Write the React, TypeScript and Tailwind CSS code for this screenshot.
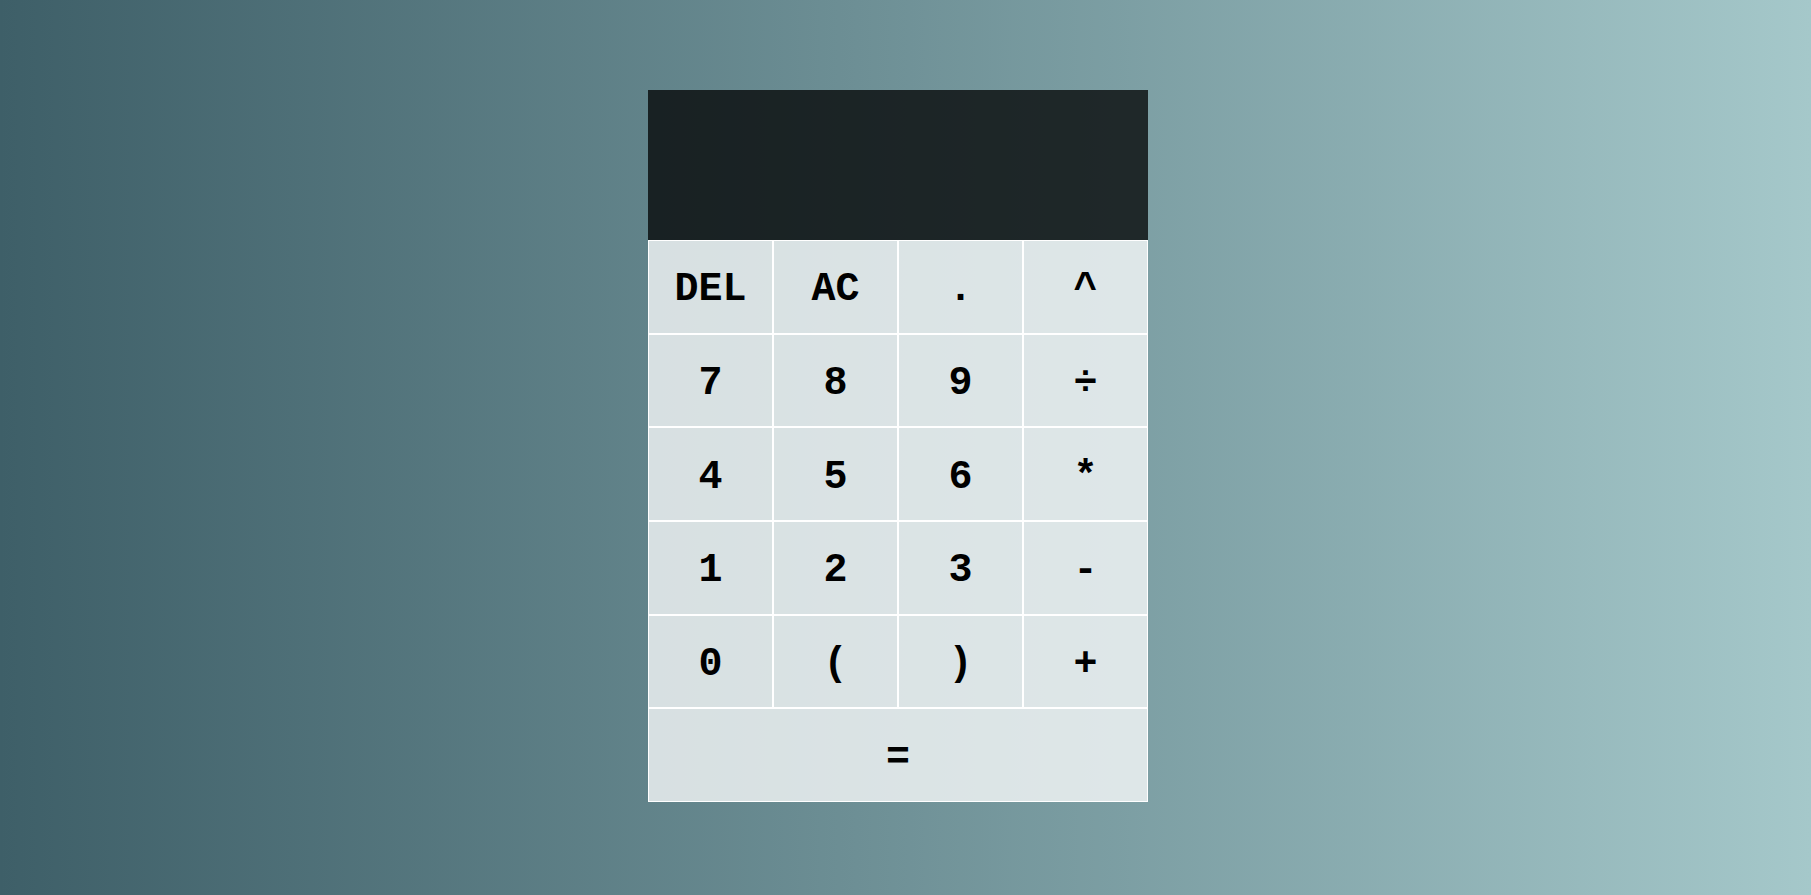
import { useState } from 'react'

const keys: { label: string; wide?: boolean }[] = [
  { label: 'DEL' },
  { label: 'AC' },
  { label: '.' },
  { label: '^' },
  { label: '7' },
  { label: '8' },
  { label: '9' },
  { label: '÷' },
  { label: '4' },
  { label: '5' },
  { label: '6' },
  { label: '*' },
  { label: '1' },
  { label: '2' },
  { label: '3' },
  { label: '-' },
  { label: '0' },
  { label: '(' },
  { label: ')' },
  { label: '+' },
  { label: '=', wide: true },
]

export default function App() {
  const [expr, setExpr] = useState('')

  const press = (k: string) => {
    if (k === 'AC') return setExpr('')
    if (k === 'DEL') return setExpr((e) => e.slice(0, -1))
    if (k === '=') return
    setExpr((e) => e + k)
  }

  return (
    <div className="flex min-h-screen justify-center bg-gradient-to-r from-[#3e5f68] to-[#a5c8ca] pr-[15px] pt-[90px]">
      <div className="grid h-fit grid-cols-[repeat(4,125px)] grid-rows-[150px_repeat(6,93.67px)]">
        <div className="col-span-4 flex flex-col items-end justify-around break-all bg-black/75 p-3 text-right font-['Liberation_Mono',monospace] text-4xl text-white">
          {expr}
        </div>
        {keys.map(({ label, wide }) => (
          <button
            key={label}
            type="button"
            onClick={() => press(label)}
            className={`${wide ? 'col-span-4' : ''} flex cursor-pointer items-center justify-center border border-white bg-white/75 pt-[7px] font-['Liberation_Mono',monospace] text-[40px] font-bold text-black outline-none hover:bg-white/90`}
          >
            {label}
          </button>
        ))}
      </div>
    </div>
  )
}
